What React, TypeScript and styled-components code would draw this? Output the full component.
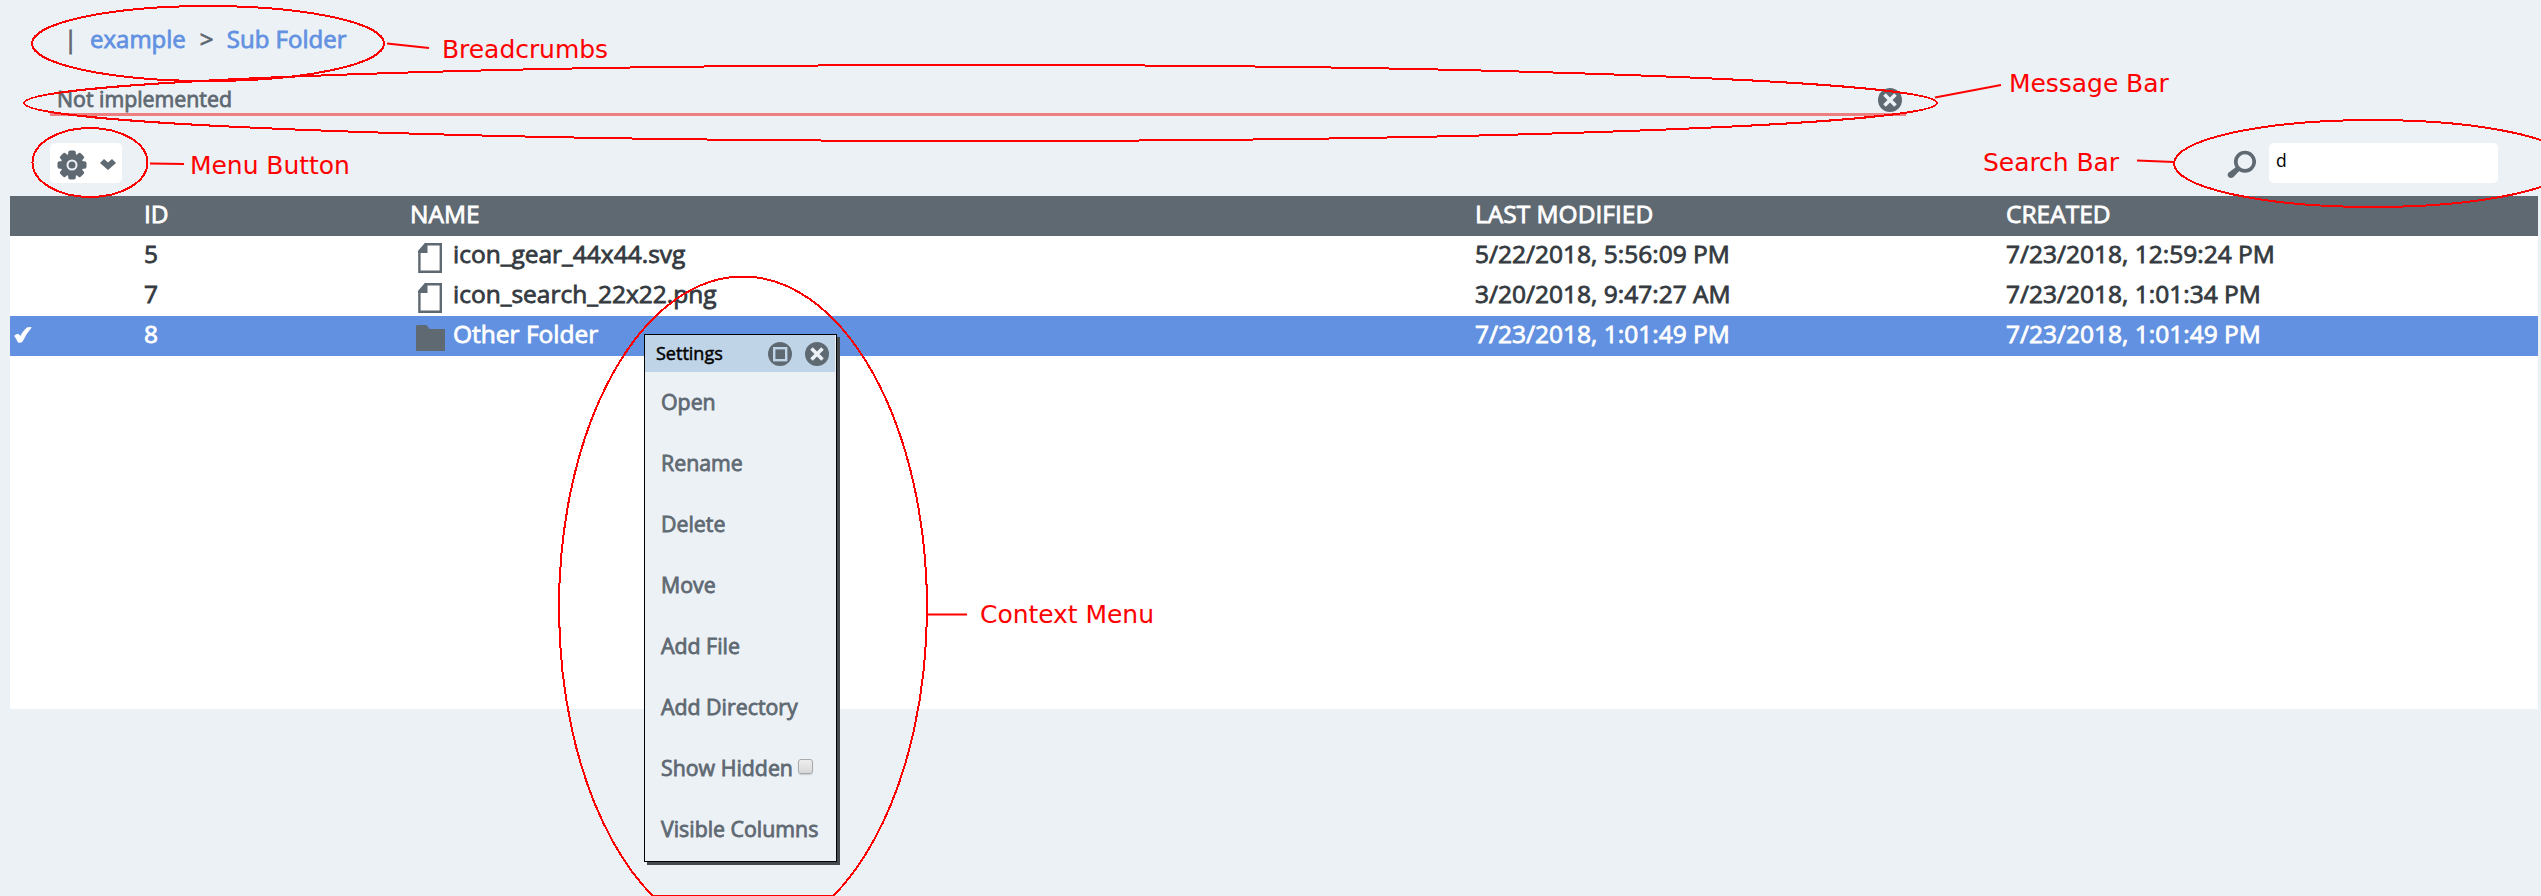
import React from "react";
import styled, { createGlobalStyle } from "styled-components";

const SLATE = "#5f6972";
const BLUE = "#6291e1";

const Global = createGlobalStyle`
  * { box-sizing: border-box; }
  html, body { margin: 0; padding: 0; overflow: hidden; }
  body { font-family: "Open Sans", "Noto Sans", sans-serif; background: #ecf1f6; color: ${SLATE}; }
`;

const Page = styled.main`
  position: relative;
  width: 2541px;
  height: 896px;
  padding: 0 3px 0 10px;
  display: flex;
  flex-direction: column;
  overflow: hidden;
  background: #ecf1f6;
  -webkit-text-stroke: 0.8px currentColor;
`;

const Breadcrumbs = styled.nav`
  height: 88px;
  padding: 22px 0 0 54px;
  display: flex;
  align-items: flex-start;
  font-size: 24px;
  line-height: 33px;
  white-space: pre;
`;
const Divider = styled.span`
  width: 26px;
`;
const Crumb = styled.a`
  color: ${BLUE};
`;
const Arrow = styled.span`
  width: 41px;
  padding-left: 14px;
`;

const MessageBar = styled.div`
  height: 28px;
  width: 1856px;
  margin-left: 40px;
  padding: 0 4px 0 7px;
  display: flex;
  justify-content: space-between;
  border-bottom: 3px solid #ee7f80;
  font-size: 21.33px;
  line-height: 21px;
  svg { flex: none; }
`;

const Toolbar = styled.div`
  height: 80px;
  padding: 27px 40px 0 40px;
  display: flex;
  justify-content: space-between;
  align-items: flex-start;
`;
const MenuButton = styled.button`
  width: 72px;
  height: 40px;
  padding: 3px 6px 0 7px;
  border: 0;
  border-radius: 5px;
  background: #fff;
  display: flex;
  align-items: center;
  justify-content: space-between;
`;
const Search = styled.label`
  display: flex;
  align-items: center;
  gap: 13px;
`;
const SearchInput = styled.input`
  width: 229px;
  height: 40px;
  padding: 0 7px 6px;
  border: 0;
  border-radius: 5px;
  outline: 0;
  background: #fff;
  color: #000;
  font: 17.5px "Open Sans", sans-serif;
  -webkit-text-stroke: 0;
`;

const Table = styled.section`
  height: 513px;
  background: #fff;
`;
const Row = styled.div<{ $kind?: "head" | "selected" }>`
  height: 40px;
  display: grid;
  grid-template-columns: 134px 266px 1065px 531px 1fr;
  font-size: 24.5px;
  line-height: 36px;
  color: ${(p) => (p.$kind ? "#fff" : "#343a40")};
  background: ${(p) => (p.$kind === "head" ? SLATE : p.$kind === "selected" ? BLUE : "#fff")};
`;
const Cell = styled.div`
  white-space: nowrap;
`;
const CheckCell = styled(Cell)`
  padding: 11px 0 0 4px;
  line-height: 0;
`;
const NameCell = styled(Cell)`
  display: flex;
  gap: 8px;
  padding-left: 6px;
  svg { flex: none; margin-top: 7px; }
`;

const Menu = styled.aside`
  position: absolute;
  left: 644px;
  top: 334px;
  width: 193px;
  height: 528px;
  border: 1px solid #000;
  background: #ecf1f6;
  box-shadow: 3px 3px 0 #444a4e;
`;
const MenuHeader = styled.header`
  height: 37px;
  margin-right: 1px;
  padding: 0 6px 0 11px;
  display: flex;
  align-items: center;
  background: #c0d4e8;
  color: #000;
  font-size: 18px;
  -webkit-text-stroke-width: 0.5px;
  svg { margin-left: 13px; margin-top: 1px; }
`;
const MenuTitle = styled.span`
  flex: 1;
  padding-bottom: 2px;
  line-height: 24px;
`;
const MenuItem = styled.div`
  height: 61px;
  padding: 0 0 2px 16px;
  display: flex;
  align-items: center;
  font-size: 21.33px;
  white-space: nowrap;
`;
const Check = styled.span`
  width: 15px;
  height: 15px;
  margin: -3px 0 0 5px;
  border: 1px solid #a8a8a8;
  border-radius: 3px;
  background: linear-gradient(#eee, #d8d8d8);
  box-shadow: 0 1px 1px #c9cdd1;
`;

const Overlay = styled.svg`
  position: absolute;
  inset: 0;
  fill: none;
  stroke: #f00;
  stroke-width: 2;
  pointer-events: none;
`;
const Note = styled.span<{ $x: number; $y: number }>`
  position: absolute;
  left: ${(p) => p.$x}px;
  top: ${(p) => p.$y}px;
  color: #f00;
  font: 25px/28px "DejaVu Sans", sans-serif;
  letter-spacing: -0.05px;
  white-space: nowrap;
  -webkit-text-stroke: 0;
`;

const CloseIcon = () => (
  <svg width="24" height="24" viewBox="0 0 24 24">
    <circle cx="12" cy="12" r="12" fill={SLATE} />
    <path d="M6.5 6.5l11 11M17.5 6.5l-11 11" stroke="#ecf1f6" strokeWidth="3.6" />
  </svg>
);
const RestoreIcon = () => (
  <svg width="24" height="24" viewBox="0 0 24 24">
    <circle cx="12" cy="12" r="12" fill={SLATE} />
    <rect x="6.2" y="6.2" width="12" height="12" fill="none" stroke="#c0d4e8" strokeWidth="2.4" />
  </svg>
);
const GearIcon = () => (
  <svg width="30" height="30" viewBox="-15 -15 30 30" fill={SLATE}>
    {[0, 45, 90, 135].map((a) => (
      <rect key={a} x="-3.8" y="-14.5" width="7.6" height="29" rx="2" transform={`rotate(${a})`} />
    ))}
    <circle r="11.3" />
    <circle r="4.5" fill="none" stroke="#ecf1f6" strokeWidth="2" />
  </svg>
);
const ChevronIcon = () => (
  <svg width="16" height="11" viewBox="0 0 16 11" fill={SLATE}>
    <path d="M0 4 4 0 8 3.6 12 0 16 4 8 11z" />
  </svg>
);
const SearchIcon = () => (
  <svg width="29" height="31" viewBox="0 0 29 31">
    <circle cx="18" cy="13.7" r="9.2" fill="none" stroke={SLATE} strokeWidth="3.7" />
    <path d="M9.8 18.6 13.2 22 6.3 29.3Q3.5 31 1.6 29.1T1.4 24.8z" fill={SLATE} />
  </svg>
);
const FileIcon = () => (
  <svg width="29" height="30" viewBox="0 0 29 30">
    <path d="M9.6 1.2H24.8V28.8H3.4V8.8z" fill="#fff" stroke={SLATE} strokeWidth="2.4" />
    <path d="M2 10V8L9 0H11.5V10z" fill={SLATE} />
  </svg>
);
const FolderIcon = () => (
  <svg width="29" height="30" viewBox="0 0 29 30" fill={SLATE}>
    <path d="M0 3 1 2H10.5L13.5 6H29V28H0z" />
  </svg>
);
const TickIcon = () => (
  <svg width="18" height="16" viewBox="0 0 18 16" fill="#fff" stroke="#fff" strokeWidth="0.9" strokeLinejoin="round">
    <path d="M.6 8.8Q2.4 6.8 4.7 7.4L6.2 9.8Q9.4 3.6 13 .8L17.2.6Q11.8 6.6 8 14.8L4.4 15.4Q2.8 12 .6 8.8z" />
  </svg>
);

const rows = [
  { id: 5, name: "icon_gear_44x44.svg", modified: "5/22/2018, 5:56:09 PM", created: "7/23/2018, 12:59:24 PM" },
  { id: 7, name: "icon_search_22x22.png", modified: "3/20/2018, 9:47:27 AM", created: "7/23/2018, 1:01:34 PM" },
  { id: 8, name: "Other Folder", modified: "7/23/2018, 1:01:49 PM", created: "7/23/2018, 1:01:49 PM", selected: true },
];
const menuItems = ["Open", "Rename", "Delete", "Move", "Add File", "Add Directory", "Show Hidden", "Visible Columns"];

export default function App() {
  return (
    <Page>
      <Global />
      <Breadcrumbs>
        <Divider>|</Divider>
        <Crumb>example</Crumb>
        <Arrow>&gt;</Arrow>
        <Crumb>Sub Folder</Crumb>
      </Breadcrumbs>
      <MessageBar>
        <span>Not implemented</span>
        <CloseIcon />
      </MessageBar>
      <Toolbar>
        <MenuButton aria-label="Menu">
          <GearIcon />
          <ChevronIcon />
        </MenuButton>
        <Search>
          <SearchIcon />
          <SearchInput defaultValue="d" />
        </Search>
      </Toolbar>
      <Table>
        <Row $kind="head">
          <Cell />
          <Cell>ID</Cell>
          <Cell>NAME</Cell>
          <Cell>LAST MODIFIED</Cell>
          <Cell>CREATED</Cell>
        </Row>
        {rows.map((r) => (
          <Row key={r.id} $kind={r.selected ? "selected" : undefined}>
            <CheckCell>{r.selected && <TickIcon />}</CheckCell>
            <Cell>{r.id}</Cell>
            <NameCell>
              {r.selected ? <FolderIcon /> : <FileIcon />}
              {r.name}
            </NameCell>
            <Cell>{r.modified}</Cell>
            <Cell>{r.created}</Cell>
          </Row>
        ))}
      </Table>
      <Menu>
        <MenuHeader>
          <MenuTitle>Settings</MenuTitle>
          <RestoreIcon />
          <CloseIcon />
        </MenuHeader>
        {menuItems.map((m) => (
          <MenuItem key={m}>
            {m}
            {m === "Show Hidden" && <Check />}
          </MenuItem>
        ))}
      </Menu>
      <Overlay width="2541" height="896" shapeRendering="crispEdges">
        <ellipse cx="208" cy="43.5" rx="176" ry="37.5" />
        <ellipse cx="980.5" cy="103" rx="956.5" ry="38" />
        <ellipse cx="90" cy="162.5" rx="57.5" ry="34.5" />
        <ellipse cx="2373" cy="163.5" rx="199" ry="43.5" />
        <ellipse cx="743" cy="607.5" rx="184" ry="331" />
        <path d="M652 895.5H834" />
      </Overlay>
      <Overlay width="2541" height="896">
        <path d="M387 43.5 429 48M150 163.5 184 164M1935 97.5 2001 85M2137 160.5 2174 162M927 614.5H967" />
      </Overlay>
      <Note $x={442} $y={36}>Breadcrumbs</Note>
      <Note $x={2009} $y={70}>Message Bar</Note>
      <Note $x={190} $y={152}>Menu Button</Note>
      <Note $x={1983} $y={149}>Search Bar</Note>
      <Note $x={980} $y={601}>Context Menu</Note>
    </Page>
  );
}
